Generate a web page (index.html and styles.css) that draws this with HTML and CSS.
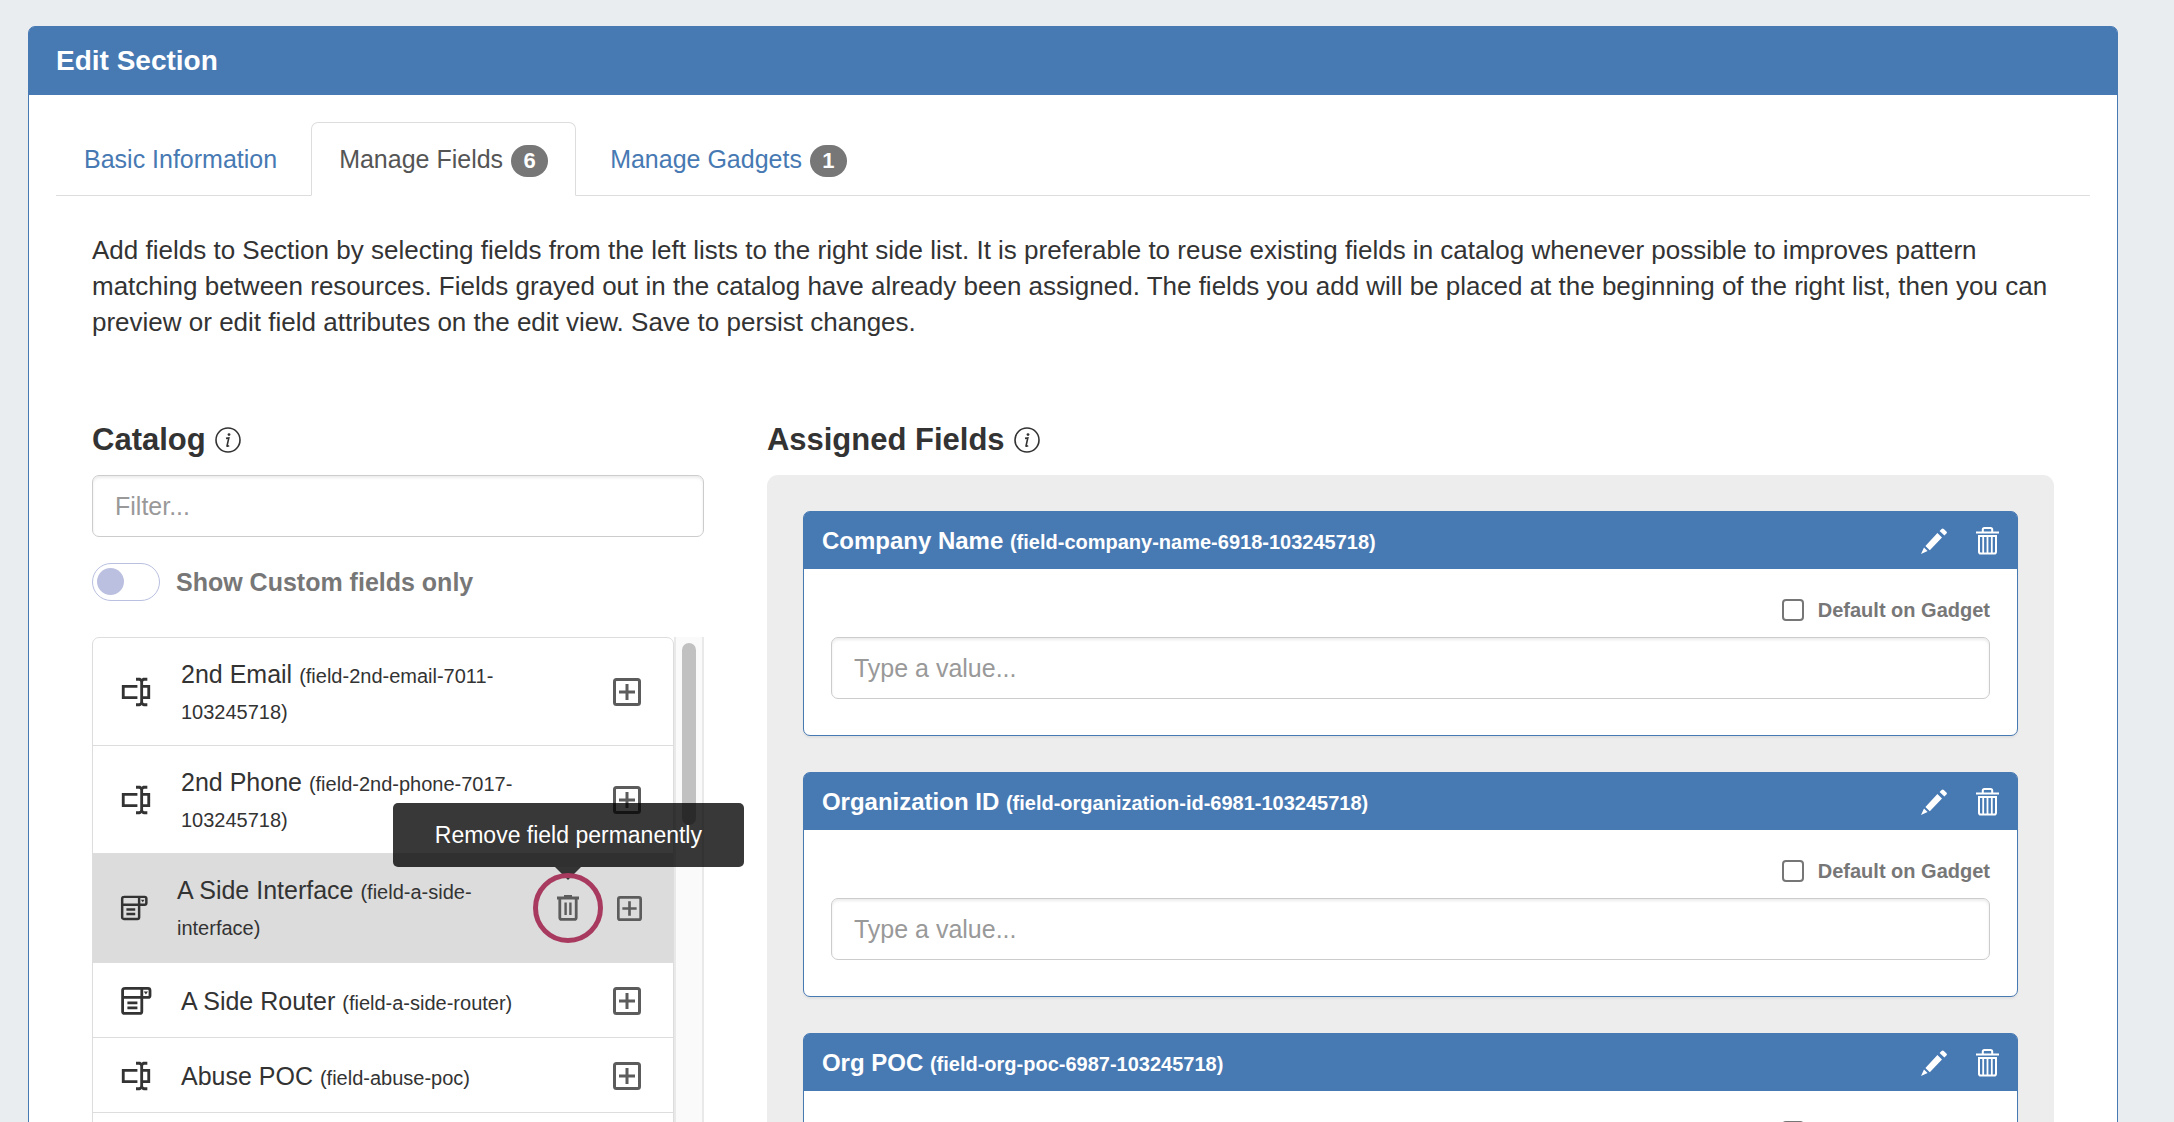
FILE: index.html
```
<!DOCTYPE html>
<html lang="en">
    <head>
        <meta charset="utf-8">
        <meta name="viewport" content="width=device-width, initial-scale=1">

        <title>Edit Section</title>
        <link rel="stylesheet" href="styles.css">
    </head>
    <body>
        <!-- Shared icons -->
        <svg class="sprite" aria-hidden="true">
            <symbol id="icon-info" viewBox="0 0 26 26">
                <circle cx="13" cy="13" r="12" fill="none" stroke="currentColor" stroke-width="1.6"/>
                <circle cx="14" cy="7.6" r="1.4" fill="currentColor"/>
                <path d="M11 11.4L13.8 11L12 19Q12 19.8 14.2 18.6" fill="none" stroke="currentColor" stroke-width="1.6"/>
            </symbol>
            <symbol id="icon-textbox" viewBox="0 0 24 24">
                <path fill="currentColor" d="M17,7H22V17H17V19A1,1 0 0,0 18,20H20V22H17.5C16.95,22 16,21.55 16,21C16,21.55 15.05,22 14.5,22H12V20H14A1,1 0 0,0 15,19V5A1,1 0 0,0 14,4H12V2H14.5C15.05,2 16,2.45 16,3C16,2.45 16.95,2 17.5,2H20V4H18A1,1 0 0,0 17,5V7M2,7H13V9H4V15H13V17H2V7M20,15V9H17V15H20Z"/>
            </symbol>
            <symbol id="icon-dropdown" viewBox="-2 0 34 34">
                <path d="M3.4 4.4H27Q29 4.4 29 6.4V11.4Q29 13.4 27 13.4H1.6M20.8 4V27.4Q20.8 29.4 18.8 29.4H3.6Q1.6 29.4 1.6 27.4V6.4Q1.6 4.4 3.6 4.4M6.4 18.8H16.4M6.4 23.8H16.4" fill="none" stroke="currentColor" stroke-width="2.8"/>
                <path d="M22.8 7.6H27L24.9 10.4Z" fill="currentColor"/>
            </symbol>
            <symbol id="icon-plus" viewBox="0 0 28 28">
                <rect x="1.5" y="1.5" width="25" height="25" rx="2" fill="none" stroke="currentColor" stroke-width="3"/>
                <path d="M14 6V22M6 14H22" fill="none" stroke="currentColor" stroke-width="3"/>
            </symbol>
            <symbol id="icon-bin" viewBox="0 0 22 26">
                <path d="M0 3H22M7 1.5H15M2.8 3V22.4Q2.8 24.4 4.8 24.4H17.2Q19.2 24.4 19.2 22.4V3" fill="none" stroke="currentColor" stroke-width="2.8"/>
                <path d="M8.6 7.5V20M13.4 7.5V20" fill="none" stroke="currentColor" stroke-width="2.4"/>
            </symbol>
            <symbol id="icon-pencil" viewBox="0 0 26 26">
                <path fill="currentColor" d="M0 26L3 19.4L6.6 23ZM4.4 18L16.4 5L21 9.6L8.8 22.2ZM18.6 3L20.6 1Q21.6 0 22.8 1L25.4 3.6Q26.4 4.6 25.4 5.6L23.4 7.6Z"/>
            </symbol>
            <symbol id="icon-trash" viewBox="0 0 23 28">
                <path d="M0 5.5H23M6.8 5V2.6Q6.8 1 8.4 1H14.6Q16.2 1 16.2 2.6V5" fill="none" stroke="currentColor" stroke-width="2"/>
                <path d="M3 9V24.8Q3 26.6 4.8 26.6H18.2Q20 26.6 20 24.8V9Z" fill="none" stroke="currentColor" stroke-width="2"/>
                <path d="M7.2 9V26M11.5 9V26M15.8 9V26" fill="none" stroke="currentColor" stroke-width="1.8"/>
            </symbol>
        </svg>

        <main class="panel">
            <header class="panel-heading">
                <h1>Edit Section</h1>
            </header>
            <div class="panel-body">
                <nav class="tabs">
                    <a class="tab" href="#basic">Basic Information</a>
                    <a class="tab active" href="#fields">Manage Fields <span class="badge">6</span></a>
                    <a class="tab" href="#gadgets">Manage Gadgets <span class="badge">1</span></a>
                </nav>

                <div class="tab-content" id="fields">
                    <p class="intro">Add fields to Section by selecting fields from the left lists to the right side list. It is preferable to reuse existing fields in catalog whenever possible to improves pattern matching between resources. Fields grayed out in the catalog have already been assigned. The fields you add will be placed at the beginning of the right list, then you can preview or edit field attributes on the edit view. Save to persist changes.</p>

                    <div class="columns">
                        <section class="catalog">
                            <h2>Catalog <svg class="info"><use href="#icon-info"/></svg></h2>
                            <input class="form-control" type="text" placeholder="Filter..." aria-label="Filter">
                            <label class="switch">
                                <input type="checkbox">
                                <span>Show Custom fields only</span>
                            </label>

                            <div class="scroller">
                                <ul class="field-list">
                                    <li>
                                        <svg class="type"><use href="#icon-textbox"/></svg>
                                        <p>2nd Email <small>(field-2nd-email-7011-103245718)</small></p>
                                        <button type="button" aria-label="Add 2nd Email"><svg class="plus"><use href="#icon-plus"/></svg></button>
                                    </li>
                                    <li>
                                        <svg class="type"><use href="#icon-textbox"/></svg>
                                        <p>2nd Phone <small>(field-2nd-phone-7017-103245718)</small></p>
                                        <button type="button" aria-label="Add 2nd Phone"><svg class="plus"><use href="#icon-plus"/></svg></button>
                                    </li>
                                    <li class="hover">
                                        <svg class="type"><use href="#icon-dropdown"/></svg>
                                        <p>A Side Interface <small>(field-a-side-interface)</small></p>
                                        <button type="button" class="remove" aria-label="Remove A Side Interface">
                                            <svg class="bin"><use href="#icon-bin"/></svg>
                                            <span class="tooltip" role="tooltip">Remove field permanently</span>
                                        </button>
                                        <button type="button" aria-label="Add A Side Interface"><svg class="plus"><use href="#icon-plus"/></svg></button>
                                    </li>
                                    <li>
                                        <svg class="type"><use href="#icon-dropdown"/></svg>
                                        <p>A Side Router <small>(field-a-side-router)</small></p>
                                        <button type="button" aria-label="Add A Side Router"><svg class="plus"><use href="#icon-plus"/></svg></button>
                                    </li>
                                    <li>
                                        <svg class="type"><use href="#icon-textbox"/></svg>
                                        <p>Abuse POC <small>(field-abuse-poc)</small></p>
                                        <button type="button" aria-label="Add Abuse POC"><svg class="plus"><use href="#icon-plus"/></svg></button>
                                    </li>
                                </ul>
                                <div class="scrollbar"><div class="thumb"></div></div>
                            </div>
                        </section>

                        <section class="assigned">
                            <h2>Assigned Fields <svg class="info"><use href="#icon-info"/></svg></h2>
                            <div class="assigned-list">
                                <article class="card">
                                    <header>
                                        <h3>Company Name <small>(field-company-name-6918-103245718)</small></h3>
                                        <button type="button" aria-label="Edit"><svg class="pencil"><use href="#icon-pencil"/></svg></button>
                                        <button type="button" aria-label="Delete"><svg class="trash"><use href="#icon-trash"/></svg></button>
                                    </header>
                                    <div class="card-body">
                                        <label class="check"><input type="checkbox"> Default on Gadget</label>
                                        <input class="form-control" type="text" placeholder="Type a value..." aria-label="Company Name">
                                    </div>
                                </article>
                                <article class="card">
                                    <header>
                                        <h3>Organization ID <small>(field-organization-id-6981-103245718)</small></h3>
                                        <button type="button" aria-label="Edit"><svg class="pencil"><use href="#icon-pencil"/></svg></button>
                                        <button type="button" aria-label="Delete"><svg class="trash"><use href="#icon-trash"/></svg></button>
                                    </header>
                                    <div class="card-body">
                                        <label class="check"><input type="checkbox"> Default on Gadget</label>
                                        <input class="form-control" type="text" placeholder="Type a value..." aria-label="Organization ID">
                                    </div>
                                </article>
                                <article class="card">
                                    <header>
                                        <h3>Org POC <small>(field-org-poc-6987-103245718)</small></h3>
                                        <button type="button" aria-label="Edit"><svg class="pencil"><use href="#icon-pencil"/></svg></button>
                                        <button type="button" aria-label="Delete"><svg class="trash"><use href="#icon-trash"/></svg></button>
                                    </header>
                                    <div class="card-body">
                                        <label class="check"><input type="checkbox"> Default on Gadget</label>
                                    </div>
                                </article>
                            </div>
                        </section>
                    </div>
                </div>
            </div>
        </main>
    </body>
</html>
```
FILE: styles.css
```
* { box-sizing: border-box; }

body {
    margin: 0;
    padding: 26px 56px 0 28px;
    height: 100vh;
    overflow: hidden;
    background: #e9edf0;
    color: #333;
    font: 25px/36px "Liberation Sans", Arial, sans-serif;
}

h1, h2, h3, p, ul {
    margin: 0;
    padding: 0;
}

button {
    display: flex;
    padding: 0;
    border: 0;
    background: none;
    color: inherit;
    font: inherit;
}

.sprite {
    position: absolute;
    width: 0;
    height: 0;
}

.panel {
    min-height: 100%;
    border: 1px solid #4779b3;
    border-radius: 7px 7px 0 0;
    background: #fff;
}

.panel-heading {
    padding: 16px 27px;
    border-radius: 5px 5px 0 0;
    background: #4779b3;
    color: #fff;
}

.panel-heading h1 {
    font-size: 28px;
    line-height: 36px;
}

.panel-body { padding: 27px; }

/* Tabs */
.tabs {
    display: flex;
    gap: 6px;
    border-bottom: 1px solid #ddd;
}

.tab {
    display: flex;
    align-items: center;
    gap: 8px;
    margin-bottom: -1px;
    padding: 18px 27px;
    border: 1px solid transparent;
    border-radius: 7px 7px 0 0;
    color: #4779b3;
    text-decoration: none;
}

.tab.active {
    border-color: #ddd;
    border-bottom-color: #fff;
    background: #fff;
    color: #555;
}

.badge {
    min-width: 37px;
    margin-top: 4px;
    border-radius: 16px;
    background: #777;
    color: #fff;
    font-size: 22px;
    font-weight: bold;
    line-height: 32px;
    text-align: center;
}

.tab-content { padding: 36px; }

.intro { font-size: 26px; }

.columns {
    display: grid;
    grid-template-columns: 29fr 61fr;
    gap: 63px;
    margin-top: 81px;
}

h2 {
    display: flex;
    align-items: center;
    gap: 9px;
    margin-bottom: 16px;
    font-size: 31px;
    line-height: 38px;
}

.info {
    width: 26px;
    height: 26px;
}

.form-control {
    display: block;
    width: 100%;
    height: 62px;
    padding: 0 22px;
    border: 1px solid #ccc;
    border-radius: 7px;
    box-shadow: inset 0 2px 3px rgba(0, 0, 0, 0.08);
    background: #fff;
    font: inherit;
}

.form-control::placeholder { color: #999; }

/* Custom fields toggle */
.switch {
    display: flex;
    align-items: center;
    gap: 16px;
    margin: 26px 0 36px;
    color: #777;
    font-weight: bold;
}

.switch input {
    appearance: none;
    width: 68px;
    height: 38px;
    margin: 0;
    padding: 4px;
    border: 1px solid #b9c0e0;
    border-radius: 19px;
}

.switch input::before {
    content: "";
    display: block;
    width: 27px;
    height: 27px;
    border-radius: 50%;
    background: #bcc0e0;
}

/* Catalog list */
.scroller { display: flex; }

.field-list {
    flex: 1;
    height: 600px;
    border: 1px solid #ddd;
    border-radius: 7px 7px 0 0;
    list-style: none;
}

.field-list li {
    display: flex;
    align-items: center;
    min-height: 75px;
    padding: 18px 32px 17px 26px;
    border-bottom: 1px solid #ddd;
}

.field-list p {
    flex: 1;
    padding: 0 40px 0 28px;
}

small {
    font-size: 20px;
    line-height: 20px;
}

.type {
    width: 34px;
    height: 34px;
}

.plus {
    width: 28px;
    height: 28px;
    color: #5c5c5c;
}

.field-list .hover {
    padding: 18px 31px 18px 26px;
    background: #dcdcdc;
}

.hover .type {
    width: 30px;
    height: 30px;
}

.hover .plus {
    width: 25px;
    height: 25px;
}

.remove {
    position: relative;
    align-items: center;
    justify-content: center;
    width: 70px;
    height: 70px;
    margin: 0 14px 0 0;
    color: #5c5c5c;
}

/* Highlight ring, drawn over the tooltip arrow */
.remove::after {
    content: "";
    position: absolute;
    inset: 0;
    z-index: 2;
    border: 5px solid #a93a5f;
    border-radius: 50%;
}

.bin {
    width: 22px;
    height: 26px;
}

.tooltip {
    position: absolute;
    bottom: 76px;
    left: -140px;
    z-index: 1;
    width: 351px;
    padding: 14px 0;
    border-radius: 5px;
    background: rgba(0, 0, 0, 0.78);
    color: #fff;
    font-size: 23px;
    text-align: center;
    white-space: nowrap;
}

.tooltip::after {
    content: "";
    position: absolute;
    top: 100%;
    left: 50%;
    margin-left: -13px;
    border: 13px solid transparent;
    border-top-color: #343434;
    border-bottom: 0;
}

.scrollbar {
    width: 30px;
    padding: 6px 6px 0;
    border: solid #e9e9e9;
    border-width: 0 2px;
    background: #fafafa;
}

.thumb {
    height: 182px;
    border-radius: 8px;
    background: #c1c1c1;
}

/* Assigned fields */
.assigned-list {
    display: flex;
    flex-direction: column;
    gap: 36px;
    min-height: 700px;
    padding: 36px;
    border-radius: 11px 11px 0 0;
    background: #ededed;
}

.card {
    border: 1px solid #4779b3;
    border-radius: 7px;
    box-shadow: 0 2px 2px rgba(0, 0, 0, 0.05);
    background: #fff;
}

.card header {
    display: flex;
    align-items: center;
    gap: 29px;
    height: 57px;
    padding: 0 18px;
    border-radius: 5px 5px 0 0;
    background: #4779b3;
    color: #fff;
}

.card h3 {
    flex: 1;
    font-size: 24px;
}

.pencil {
    width: 26px;
    height: 26px;
}

.trash {
    width: 23px;
    height: 28px;
}

.card-body { padding: 23px 27px 36px; }

.check {
    display: flex;
    align-items: center;
    justify-content: flex-end;
    gap: 14px;
    margin-bottom: 9px;
    color: #777;
    font-size: 20px;
    font-weight: bold;
}

.check input {
    appearance: none;
    width: 22px;
    height: 22px;
    margin: 0;
    border: 2px solid #767676;
    border-radius: 4px;
    background: #fff;
}
```
